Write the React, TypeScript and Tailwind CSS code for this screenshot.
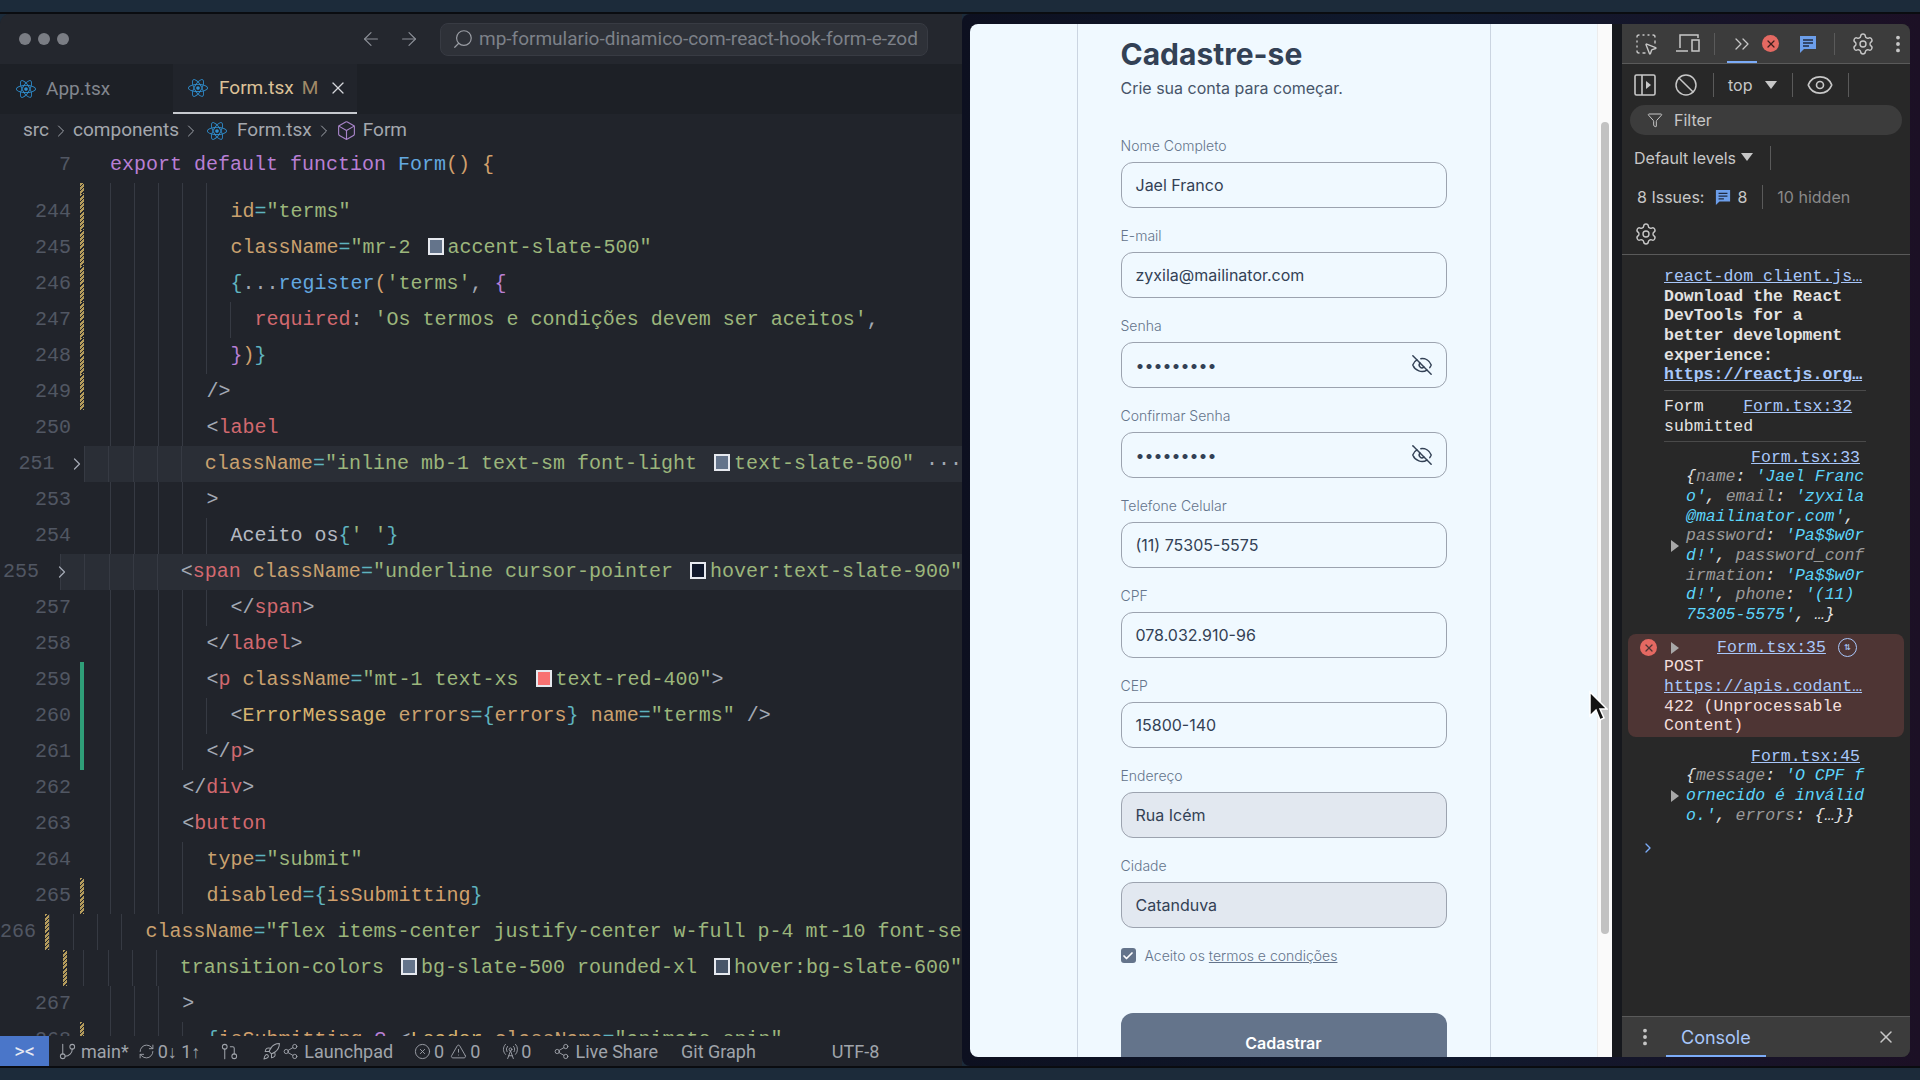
import React from 'react';
import { FaReact } from 'react-icons/fa';
import {
  ArrowLeft, ArrowRight, Search, X, ChevronRight, Box, EyeOff, GitBranch, RefreshCw, Rocket, CircleX,
  TriangleAlert, RadioTower, Share2, SquareDashedMousePointer, ChevronsRight, Settings, EllipsisVertical,
  Ban, Eye, Funnel, Check, GitPullRequest,
} from 'lucide-react';

const tokenClass: Record<string, string> = {
  t: 'text-[#d2696f]',
  a: 'text-[#c9a16f]',
  s: 'text-[#9cb67c]',
  e: 'text-[#5fb3bf]',
  p: 'text-[#a3a9b4]',
  k: 'text-[#b87fd4]',
  f: 'text-[#63a8e0]',
  y: 'text-[#d1a06c]',
  w: 'text-[#b4b9c2]',
  c: 'text-[#d8b46f]',
};

type Tok = [string, string];
type Row = { n?: number; indent: number; toks: Tok[]; mark?: 'y' | 'g'; fold?: boolean; hl?: boolean };

const rows: Row[] = [
  { n: 243, indent: 5, mark: 'y', toks: [['/>', 'p']] },
  { n: 244, indent: 5, mark: 'y', toks: [['id', 'a'], ['=', 'e'], ['"terms"', 's']] },
  { n: 245, indent: 5, mark: 'y', toks: [['className', 'a'], ['=', 'e'], ['"mr-2 ', 's'], ['#64748b', 'sw'], ['accent-slate-500"', 's']] },
  { n: 246, indent: 5, mark: 'y', toks: [['{', 'e'], ['...', 'p'], ['register', 'f'], ['(', 'y'], ["'terms'", 's'], [', ', 'p'], ['{', 'k']] },
  { n: 247, indent: 6, mark: 'y', toks: [['required', 't'], [': ', 'p'], ["'Os termos e condições devem ser aceitos'", 's'], [',', 'p']] },
  { n: 248, indent: 5, mark: 'y', toks: [['}', 'k'], [')', 'y'], ['}', 'e']] },
  { n: 249, indent: 4, mark: 'y', toks: [['/>', 'p']] },
  { n: 250, indent: 4, toks: [['<', 'p'], ['label', 't']] },
  { n: 251, indent: 5, fold: true, hl: true, toks: [['className', 'a'], ['=', 'e'], ['"inline mb-1 text-sm font-light ', 's'], ['#64748b', 'sw'], ['text-slate-500"', 's'], [' ···', 'p']] },
  { n: 253, indent: 4, toks: [['>', 'p']] },
  { n: 254, indent: 5, toks: [['Aceito os', 'w'], ['{', 'e'], ["' '", 's'], ['}', 'e']] },
  { n: 255, indent: 5, fold: true, hl: true, toks: [['<', 'p'], ['span', 't'], [' ', 'p'], ['className', 'a'], ['=', 'e'], ['"underline cursor-pointer ', 's'], ['#0f172a', 'sw'], ['hover:text-slate-900"', 's']] },
  { n: 257, indent: 5, toks: [['</', 'p'], ['span', 't'], ['>', 'p']] },
  { n: 258, indent: 4, toks: [['</', 'p'], ['label', 't'], ['>', 'p']] },
  { n: 259, indent: 4, mark: 'g', toks: [['<', 'p'], ['p', 't'], [' ', 'p'], ['className', 'a'], ['=', 'e'], ['"mt-1 text-xs ', 's'], ['#f87171', 'sw'], ['text-red-400"', 's'], ['>', 'p']] },
  { n: 260, indent: 5, mark: 'g', toks: [['<', 'p'], ['ErrorMessage', 'c'], [' ', 'p'], ['errors', 'a'], ['=', 'e'], ['{', 'e'], ['errors', 'y'], ['}', 'e'], [' ', 'p'], ['name', 'a'], ['=', 'e'], ['"terms"', 's'], [' />', 'p']] },
  { n: 261, indent: 4, mark: 'g', toks: [['</', 'p'], ['p', 't'], ['>', 'p']] },
  { n: 262, indent: 3, toks: [['</', 'p'], ['div', 't'], ['>', 'p']] },
  { n: 263, indent: 3, toks: [['<', 'p'], ['button', 't']] },
  { n: 264, indent: 4, toks: [['type', 'a'], ['=', 'e'], ['"submit"', 's']] },
  { n: 265, indent: 4, mark: 'y', toks: [['disabled', 'a'], ['=', 'e'], ['{', 'e'], ['isSubmitting', 'y'], ['}', 'e']] },
  { n: 266, indent: 4, mark: 'y', toks: [['className', 'a'], ['=', 'e'], ['"flex items-center justify-center w-full p-4 mt-10 font-semibold', 's']] },
  { indent: 4, mark: 'y', toks: [['transition-colors ', 's'], ['#64748b', 'sw'], ['bg-slate-500 rounded-xl ', 's'], ['#475569', 'sw'], ['hover:bg-slate-600"', 's']] },
  { n: 267, indent: 3, toks: [['>', 'p']] },
  { n: 268, indent: 4, mark: 'y', toks: [['{', 'e'], ['isSubmitting ', 'y'], ['? ', 'k'], ['<', 'p'], ['Loader ', 'c'], ['className', 'a'], ['=', 'e'], ['"animate-spin"', 's']] },
];

function Swatch({ color }: { color: string }) {
  return (
    <span
      className="inline-block w-[16px] h-[17px] ml-[5px] mr-[4px] border-2 border-[#e6e9ef] align-[-2px]"
      style={{ backgroundColor: color }}
    />
  );
}

function CodeRow({ row }: { row: Row }) {
  return (
    <div className="flex h-[36px] shrink-0 items-center whitespace-pre">
      <span className="w-[71px] text-right text-[#515763]">{row.n}</span>
      <span className="w-[39px] h-full flex items-center relative">
        {row.mark === 'y' && <span className="ml-[9px] w-[4px] h-full bg-[repeating-linear-gradient(135deg,#b59c5c_0,#b59c5c_2px,#23262d_2px,#23262d_3px)]" />}
        {row.mark === 'g' && <span className="ml-[9px] w-[4px] h-full bg-[#2f9e78]" />}
        {row.fold && <ChevronRight size={20} strokeWidth={1.5} className="absolute left-[13px] text-[#a3a9b4]" />}
      </span>
      <div className={`flex flex-1 h-full items-center ${row.hl ? 'bg-[#2a2e36]' : ''}`}>
        {Array.from({ length: row.indent }).map((_, i) => (
          <span key={i} className="w-[24.1px] h-full shrink-0 border-l border-[#363a43]" />
        ))}
        <span>
          {row.toks.map(([text, kind], i) =>
            kind === 'sw' ? <Swatch key={i} color={text} /> : <span key={i} className={tokenClass[kind]}>{text}</span>
          )}
        </span>
      </div>
    </div>
  );
}

function Editor() {
  return (
    <div className="w-[962px] shrink-0 flex flex-col bg-[#21242b] rounded-tl-[10px] overflow-hidden">
      {/* Title bar */}
      <div className="h-[50px] shrink-0 flex items-center bg-[#24272e] pl-[19px]">
        <div className="flex gap-[7px]">
          <span className="w-[12px] h-[12px] rounded-full bg-[#7a7d84]" />
          <span className="w-[12px] h-[12px] rounded-full bg-[#7a7d84]" />
          <span className="w-[12px] h-[12px] rounded-full bg-[#7a7d84]" />
        </div>
        <ArrowLeft size={22} strokeWidth={1.3} className="ml-[291px] text-[#8b8f97]" />
        <ArrowRight size={22} strokeWidth={1.3} className="ml-[16px] text-[#8b8f97]" />
        <div className="ml-[20px] w-[488px] h-[33px] flex items-center rounded-[8px] bg-[#2e3138] border border-[#383b43] pl-[11px] text-[#7d8189] font-['Roboto',sans-serif] text-[19px]">
          <Search size={22} strokeWidth={1.3} className="-scale-x-100 mr-[5px] text-[#9a9da4]" />
          <span className="whitespace-nowrap">mp-formulario-dinamico-com-react-hook-form-e-zod</span>
        </div>
      </div>
      {/* Tabs */}
      <div className="h-[50px] shrink-0 flex bg-[#1d2026] font-['Roboto',sans-serif] text-[19px]">
        <div className="w-[173px] flex items-center pl-[16px] text-[#83878f]">
          <FaReact size={20} className="text-[#2f8fd0] mr-[10px]" />
          <span>App.tsx</span>
        </div>
        <div className="w-[184px] flex items-center pl-[15px] bg-[#21242b] border-b-2 border-[#c6c9ce] text-[#dcc197]">
          <FaReact size={20} className="text-[#2f8fd0] mr-[11px]" />
          <span>Form.tsx</span>
          <span className="ml-[8px] text-[#a08a68]">M</span>
          <X size={20} strokeWidth={1.5} className="ml-[10px] text-[#d5d7db]" />
        </div>
      </div>
      {/* Breadcrumb */}
      <div className="h-[33px] shrink-0 flex items-center pl-[23px] text-[#a3a7ae] font-['Roboto',sans-serif] text-[19px] whitespace-nowrap">
        <span>src</span>
        <ChevronRight size={20} strokeWidth={1.2} className="mx-[2px]" />
        <span>components</span>
        <ChevronRight size={20} strokeWidth={1.2} className="mx-[2px]" />
        <FaReact size={20} className="text-[#2f8fd0] mx-[4px]" />
        <span className="ml-[6px]">Form.tsx</span>
        <ChevronRight size={20} strokeWidth={1.2} className="mx-[2px]" />
        <Box size={21} strokeWidth={1.3} className="text-[#a884c9] mr-[6px]" />
        <span>Form</span>
      </div>
      {/* Code */}
      <div className="flex-1 min-h-0 overflow-hidden flex flex-col font-['Liberation_Mono',monospace] text-[20px]">
        <div className="relative z-10 h-[36px] shrink-0 flex items-center bg-[#21242b] whitespace-pre">
          <span className="w-[71px] text-right text-[#515763]">7</span>
          <span className="w-[39px]" />
          <span className="text-[#b87fd4]">export default function </span>
          <span className="text-[#63a8e0]">Form</span>
          <span className="text-[#d1a06c]">() {'{'}</span>
        </div>
        <div className="-mt-[25px] flex flex-col">
          {rows.map((row, i) => <CodeRow key={i} row={row} />)}
        </div>
      </div>
      <StatusBar />
    </div>
  );
}

function StatusBar() {
  return (
    <div className="h-[30px] shrink-0 flex items-center bg-[#21242b] text-[#a0a4ab] font-['Roboto',sans-serif] text-[18px] whitespace-nowrap">
      <span className="w-[49px] h-full flex items-center justify-center bg-[#4a76c9] text-[#e6e9f2]">
        <span className="text-[20px] leading-none">&gt;&lt;</span>
      </span>
      <GitBranch size={19} strokeWidth={1.3} className="ml-[9px]" />
      <span className="ml-[4px]">main*</span>
      <RefreshCw size={17} strokeWidth={1.3} className="ml-[9px]" />
      <span className="ml-[3px]">0↓ 1↑</span>
      <GitPullRequest size={19} strokeWidth={1.3} className="ml-[20px]" />
      <Rocket size={19} strokeWidth={1.3} className="ml-[23px]" />
      <Share2 size={17} strokeWidth={1.3} className="ml-[1px]" />
      <span className="ml-[5px]">Launchpad</span>
      <CircleX size={17} strokeWidth={1.3} className="ml-[21px]" />
      <span className="ml-[3px]">0</span>
      <TriangleAlert size={17} strokeWidth={1.3} className="ml-[6px]" />
      <span className="ml-[3px]">0</span>
      <RadioTower size={17} strokeWidth={1.3} className="ml-[22px]" />
      <span className="ml-[2px]">0</span>
      <Share2 size={17} strokeWidth={1.3} className="ml-[22px]" />
      <span className="ml-[5px]">Live Share</span>
      <span className="ml-[23px]">Git Graph</span>
      <span className="ml-[76px]">UTF-8</span>
    </div>
  );
}

function Field({ label, value, filled, secret }: { label: string; value: string; filled?: boolean; secret?: boolean }) {
  return (
    <div className="h-[90px] shrink-0">
      <div className="h-[24px] flex items-center text-[14px] font-light text-[#64748b] leading-none">{label}</div>
      <div className={`mt-[4px] h-[46px] flex items-center justify-between pl-[14px] pr-[13px] rounded-[12px] border border-[#9ca3af] text-[16px] text-[#334155] ${filled ? 'bg-[#e2e8f0]' : ''}`}>
        <span>{value}</span>
        {secret && <EyeOff size={22} strokeWidth={1.6} className="text-[#334155]" />}
      </div>
    </div>
  );
}

function FormPage() {
  return (
    <div className="w-[642px] shrink-0 flex bg-[#f0f9ff] rounded-l-[8px] overflow-hidden font-['Inter',sans-serif]">
      <div className="flex-1 flex justify-center overflow-hidden">
        <div className="w-[414px] h-full border-x border-[#cbd5e1] px-[43px] pt-[12px]">
          <h1 className="text-[30px] leading-[36px] font-bold text-[#334155]">Cadastre-se</h1>
          <p className="text-[16px] leading-[24px] mt-[4px] text-[#475569]">Crie sua conta para começar.</p>
          <div className="mt-[34px] flex flex-col">
            <Field label="Nome Completo" value="Jael Franco" />
            <Field label="E-mail" value="zyxila@mailinator.com" />
            <Field label="Senha" value="•••••••••" secret />
            <Field label="Confirmar Senha" value="•••••••••" secret />
            <Field label="Telefone Celular" value="(11) 75305-5575" />
            <Field label="CPF" value="078.032.910-96" />
            <Field label="CEP" value="15800-140" />
            <Field label="Endereço" value="Rua Icém" filled />
            <Field label="Cidade" value="Catanduva" filled />
          </div>
          <div className="flex items-center mt-[1px]">
            <span className="w-[15px] h-[15px] rounded-[3px] bg-[#64748b] flex items-center justify-center">
              <Check size={12} strokeWidth={3.5} className="text-white" />
            </span>
            <span className="ml-[9px] text-[14px] font-light text-[#64748b]">
              Aceito os <span className="underline">termos e condições</span>
            </span>
          </div>
          <button className="mt-[47px] w-full h-[60px] rounded-[12px] bg-[#64748b] text-white font-semibold text-[16px]">
            Cadastrar
          </button>
        </div>
      </div>
      <div className="w-[15px] shrink-0 bg-[#fafafa] border-l border-[#ececec] pl-[3px] pt-[98px] pb-[123px]">
        <div className="w-[8px] h-full rounded-full bg-[#c2c2c2]" />
      </div>
    </div>
  );
}

function Line({ children, className = '' }: { children?: React.ReactNode; className?: string }) {
  return <div className={`h-[19.7px] whitespace-pre ${className}`}>{children}</div>;
}

const Link2 = ({ children }: { children: React.ReactNode }) => <span className="underline text-[#a8c7fa]">{children}</span>;
const Key = ({ children }: { children: React.ReactNode }) => <span className="text-[#9a9a9a]">{children}</span>;
const Str = ({ children }: { children: React.ReactNode }) => <span className="text-[#5cd5fb]">{children}</span>;

function Triangle({ className = '' }: { className?: string }) {
  return <span className={`w-0 h-0 border-y-[6px] border-y-transparent border-l-[8px] border-l-[#a8a8a8] ${className}`} />;
}

function ChatIcon({ size = 18 }: { size?: number }) {
  return (
    <svg width={size} height={size} viewBox="0 0 18 18">
      <path d="M1 1h16v13H5l-4 4z" fill="#6c9eea" />
      <path d="M4 5h10M4 8h10M4 11h6" stroke="#1f2b42" strokeWidth="1.4" />
    </svg>
  );
}

function DevTools() {
  return (
    <div className="w-[288px] shrink-0 flex flex-col bg-[#282828] rounded-r-[8px] overflow-hidden font-['Inter',sans-serif] text-[#c7c7c7]">
      {/* Tabs toolbar */}
      <div className="h-[40px] shrink-0 flex items-center bg-[#3c3c3c] border-b border-[#5a5a5a] pl-[12px]">
        <SquareDashedMousePointer size={24} strokeWidth={1.4} />
        <span className="ml-[17px] flex items-center"><MonitorIcon /></span>
        <span className="ml-[14px] w-px h-[22px] bg-[#5a5a5a]" />
        <span className="ml-[12px] relative h-full flex items-center w-[30px] justify-center">
          <ChevronsRight size={24} strokeWidth={1.3} />
          <span className="absolute bottom-0 left-0 right-0 h-[2px] bg-[#7cacf8]" />
        </span>
        <span className="ml-[5px] w-[17px] h-[17px] rounded-full bg-[#e46962] flex items-center justify-center">
          <X size={12} strokeWidth={2.5} className="text-[#3c1f1d]" />
        </span>
        <span className="ml-[20px]"><ChatIcon /></span>
        <span className="ml-[17px] w-px h-[22px] bg-[#5a5a5a]" />
        <Settings size={24} strokeWidth={1.4} className="ml-[16px]" />
        <EllipsisVertical size={22} strokeWidth={2.2} className="ml-[12px]" />
      </div>
      {/* Console toolbar */}
      <div className="h-[41px] shrink-0 flex items-center pl-[12px]">
        <PanelIcon />
        <Ban size={24} strokeWidth={1.5} className="ml-[18px]" />
        <span className="ml-[15px] w-px h-[24px] bg-[#5a5a5a]" />
        <span className="ml-[14px] text-[16px]">top</span>
        <span className="ml-[13px] w-0 h-0 border-x-[6px] border-x-transparent border-t-[8px] border-t-[#c7c7c7]" />
        <span className="ml-[15px] w-px h-[24px] bg-[#5a5a5a]" />
        <Eye size={28} strokeWidth={1.4} className="ml-[13px]" />
        <span className="ml-[14px] w-px h-[24px] bg-[#5a5a5a]" />
      </div>
      <div className="mx-[8px] h-[30px] shrink-0 flex items-center rounded-full bg-[#3c3c3c] pl-[17px] text-[16px]">
        <Funnel size={16} strokeWidth={1.5} className="mr-[11px]" />
        Filter
      </div>
      <div className="h-[44px] mt-[1px] shrink-0 flex items-center pl-[12px] text-[16px]">
        Default levels
        <span className="ml-[5px] -mt-[3px] w-0 h-0 border-x-[6px] border-x-transparent border-t-[8px] border-t-[#c7c7c7]" />
        <span className="ml-[17px] w-px h-[24px] bg-[#5a5a5a]" />
      </div>
      <div className="h-[34px] shrink-0 flex items-center pl-[15px] text-[16px] whitespace-nowrap">
        8 Issues:
        <span className="ml-[11px]"><ChatIcon size={16} /></span>
        <span className="ml-[6px]">8</span>
        <span className="ml-[15px] w-px h-[24px] bg-[#5a5a5a]" />
        <span className="ml-[14px] text-[#8a8a8a]">10 hidden</span>
      </div>
      <div className="h-[41px] shrink-0 flex items-center pl-[12px] border-b border-[#5a5a5a]">
        <Settings size={24} strokeWidth={1.4} />
      </div>
      {/* Console messages */}
      <div className="flex-1 min-h-0 pt-[12px] font-['Liberation_Mono',monospace] text-[16.5px] leading-[19.7px] text-[#e3e3e3]">
        <div className="pl-[42px]">
          <div className="w-[202px]">
            <Line><Link2>react-dom_client.js…</Link2></Line>
            <Line className="font-bold">Download the React</Line>
            <Line className="font-bold">DevTools for a</Line>
            <Line className="font-bold">better development</Line>
            <Line className="font-bold">experience:</Line>
            <Line className="font-bold"><Link2>https://reactjs.org…</Link2></Line>
            <div className="mt-[5px] mb-[6px] border-t border-[#4a4a4a]" />
            <Line>Form    <Link2>Form.tsx:32</Link2></Line>
            <Line>submitted</Line>
            <div className="mt-[4px] mb-[6px] border-t border-[#4a4a4a]" />
            <Line className="text-right pr-[6px]"><Link2>Form.tsx:33</Link2></Line>
          </div>
        </div>
        <div className="flex items-center pl-[49px]">
          <Triangle className="mr-[7px]" />
          <div className="italic">
            <Line>{'{'}<Key>name</Key>: <Str>'Jael Franc</Str></Line>
            <Line><Str>o'</Str>, <Key>email</Key>: <Str>'zyxila</Str></Line>
            <Line><Str>@mailinator.com'</Str>,</Line>
            <Line><Key>password</Key>: <Str>'Pa$$w0r</Str></Line>
            <Line><Str>d!'</Str>, <Key>password_conf</Key></Line>
            <Line><Key>irmation</Key>: <Str>'Pa$$w0r</Str></Line>
            <Line><Str>d!'</Str>, <Key>phone</Key>: <Str>'(11)</Str></Line>
            <Line><Str>75305-5575'</Str>, …{'}'}</Line>
          </div>
        </div>
        <div className="mt-[9px] mx-[6px] h-[103px] rounded-[8px] bg-[#4e3534] pt-[4px] text-[#f2dedc]">
          <div className="flex items-center h-[19.7px] pl-[12px]">
            <span className="w-[17px] h-[17px] rounded-full bg-[#e46962] flex items-center justify-center">
              <X size={12} strokeWidth={2.5} className="text-[#4e3534]" />
            </span>
            <Triangle className="ml-[14px]" />
            <span className="ml-[38px]"><Link2>Form.tsx:35</Link2></span>
            <span className="ml-[12px] w-[19px] h-[19px] rounded-full border border-[#a8c7fa] flex items-center justify-center text-[#a8c7fa] text-[11px] leading-none">⇅</span>
          </div>
          <div className="pl-[36px]">
            <Line>POST</Line>
            <Line><Link2>https://apis.codant…</Link2></Line>
            <Line>422 (Unprocessable</Line>
            <Line>Content)</Line>
          </div>
        </div>
        <div className="mt-[10px] pl-[42px] w-[244px]">
          <Line className="text-right pr-[6px]"><Link2>Form.tsx:45</Link2></Line>
        </div>
        <div className="flex items-center pl-[49px]">
          <Triangle className="mr-[7px]" />
          <div className="italic">
            <Line>{'{'}<Key>message</Key>: <Str>'O CPF f</Str></Line>
            <Line><Str>ornecido é inválid</Str></Line>
            <Line><Str>o.'</Str>, <Key>errors</Key>: {'{…}}'}</Line>
          </div>
        </div>
        <div className="mt-[15px] pl-[18px] text-[#7cacf8]">
          <ChevronRight size={16} strokeWidth={2} />
        </div>
      </div>
      {/* Drawer */}
      <div className="h-[41px] shrink-0 flex items-center bg-[#3c3c3c] border-t border-[#5a5a5a] pl-[12px]">
        <EllipsisVertical size={22} strokeWidth={2.2} />
        <span className="ml-[10px] relative h-full flex items-center px-[15px] text-[18px] text-[#a8c7fa]">
          Console
          <span className="absolute bottom-0 left-0 right-0 h-[2px] bg-[#7cacf8]" />
        </span>
        <X size={20} strokeWidth={1.8} className="ml-auto mr-[14px]" />
      </div>
    </div>
  );
}

function MonitorIcon() {
  return (
    <svg width="25" height="22" viewBox="0 0 25 22" fill="none" stroke="#c7c7c7" strokeWidth="1.5">
      <path d="M5 15V2h18v3" />
      <path d="M1 18h12" />
      <rect x="17" y="7" width="7" height="11" />
    </svg>
  );
}

function PanelIcon() {
  return (
    <svg width="22" height="22" viewBox="0 0 22 22" fill="none" stroke="#c7c7c7" strokeWidth="1.6">
      <rect x="1" y="1" width="20" height="20" rx="1.5" />
      <path d="M8 1v20" />
      <path d="M12 7l5 4-5 4z" fill="#c7c7c7" stroke="none" />
    </svg>
  );
}

function Cursor() {
  return (
    <svg className="absolute left-[1588px] top-[690px] z-20" width="20" height="32" viewBox="0 0 20 32">
      <path d="M2 2v24l6-6 4 10 4-2-4-9h7z" fill="#111" stroke="#fff" strokeWidth="1.5" />
    </svg>
  );
}

export default function App() {
  return (
    <div className="relative w-[1920px] h-[1080px] flex flex-col bg-[#1c2b3a] overflow-hidden">
      <div className="h-[12px] shrink-0" />
      <div className="flex-1 min-h-0 flex border-y-2 border-[#0a0c10]">
        <Editor />
        <div className="flex-1 flex pl-[8px] pr-[10px] pt-[10px] pb-[9px] bg-[linear-gradient(90deg,#0d1020,#101a2e_50%,#1c1025)] rounded-l-[8px]">
          <FormPage />
          <div className="w-[10px] shrink-0 bg-[#16181d]" />
          <DevTools />
        </div>
      </div>
      <div className="h-[12px] shrink-0" />
      <Cursor />
    </div>
  );
}
